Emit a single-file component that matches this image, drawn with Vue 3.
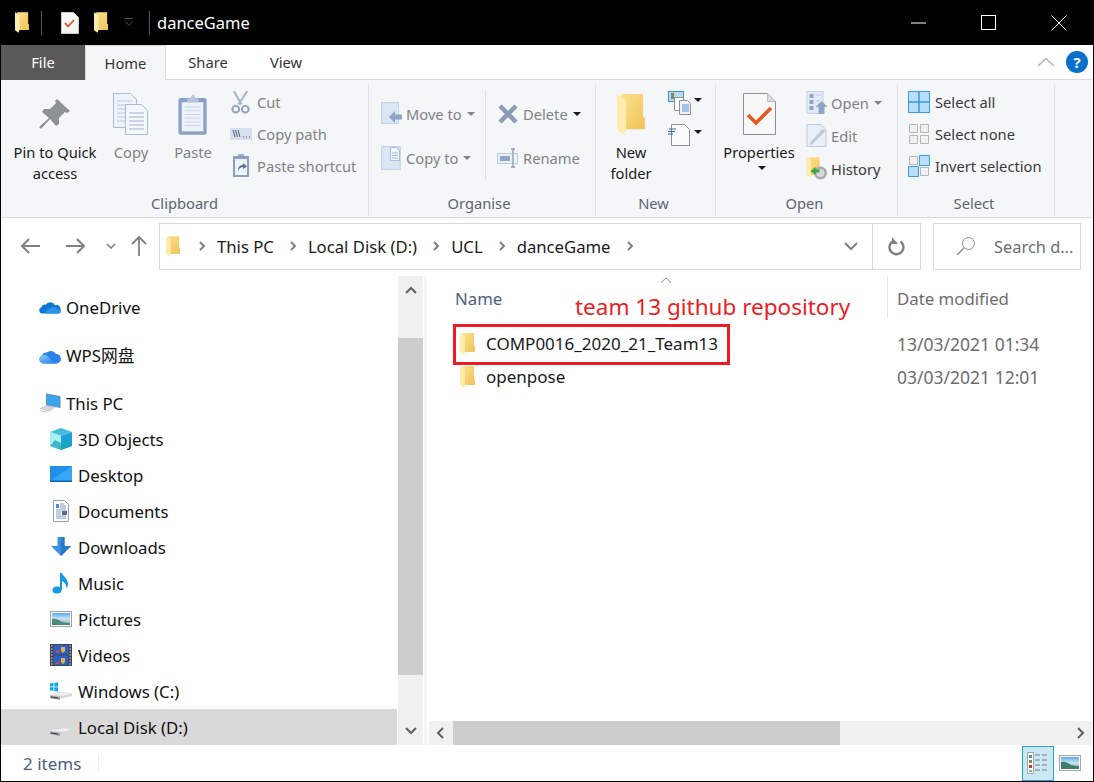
<template>
  <div class="window">
    <!-- shared icons -->
    <svg class="defs" width="0" height="0">
      <defs>
        <linearGradient id="fold" x1="0" y1="0" x2="1" y2="1">
          <stop offset="0" stop-color="#fbe28f" />
          <stop offset="1" stop-color="#f1c258" />
        </linearGradient>
        <linearGradient id="sky" x1="0" y1="0" x2="0" y2="1">
          <stop offset="0" stop-color="#5aa9ee" />
          <stop offset="0.5" stop-color="#cfe6f5" />
          <stop offset="1" stop-color="#6e9c8c" />
        </linearGradient>
        <linearGradient id="wpsg" x1="0" y1="0" x2="1" y2="1">
          <stop offset="0" stop-color="#8ccbfb" />
          <stop offset="1" stop-color="#1f78ea" />
        </linearGradient>
      </defs>
      <symbol id="i-folder" viewBox="0 0 81 120">
        <path d="M12 0H76V67L81 70V103H20Z" fill="url(#fold)" />
        <path d="M0 0L26 17V103L21 120L0 105Z" fill="#fdecab" />
      </symbol>
      <symbol id="i-onedrive" viewBox="0 0 22 22">
        <path d="M3 17.5a3.2 3.2 0 0 1-.6-6.2 3.6 3.6 0 0 1 4.2-2.6A5.4 5.4 0 0 1 16 9.2a4.2 4.2 0 0 1 5.6 4.6 3.4 3.4 0 0 1-1.8 3.7Z" fill="#0f78d4" />
        <path d="M7 17.5c-.6-2.4 1-4.8 3.600-4.800 1.400-2.200 5-2.400 6.600-.4 2-.4 4.300 1 4.300 3.400 0 .8-.5 1.500-1.200 1.800Z" fill="#2a95e8" />
      </symbol>
      <symbol id="i-wps" viewBox="0 0 22 22">
        <path d="M4.500 19.500a4.200 4.200 0 0 1-1.500-8.100 4.600 4.600 0 0 1 4.600-3A6.200 6.200 0 0 1 17 10a4.800 4.800 0 0 1 1 9.500Z" fill="#2a80ec" />
        <path d="M4.500 19.500a4.200 4.200 0 0 1-.4-8.300c3-.6 5.400 1 6.900 3.300 1.500 2.300 3.700 4 7 5Z" fill="url(#wpsg)" />
      </symbol>
      <symbol id="i-pc" viewBox="0 0 24 22">
        <path d="M8 1l15 3v12L8 13Z" fill="#39a7ec" stroke="#5c7183" stroke-width=".7" />
        <path d="M7 14l8 2 0 1-8-2Z" fill="#8fa0ac" />
        <path d="M1 17l7-3 9 2-6 4Z" fill="#d5d9dc" stroke="#a9adb0" stroke-width=".5" />
        <path d="M2 19l8 1.800-3 .6-6-1.400Z" fill="#c3c7ca" />
      </symbol>
      <symbol id="i-cube" viewBox="0 0 22 22">
        <path d="M11 0l11 4-11 4L0 4Z" fill="#44bdd8" />
        <path d="M0 4l11 4v14L0 18Z" fill="#a9eef0" />
        <path d="M22 4L11 8v14l11-4Z" fill="#1b9fd6" />
        <path d="M0 18l5-6 6 3 6-3 5 6-11 4Z" fill="#1ca6b8" opacity=".75" />
      </symbol>
      <symbol id="i-desktop" viewBox="0 0 22 22">
        <rect y="2" width="22" height="16" fill="#1f8fec" />
        <path d="M0 17L22 2v15Z" fill="#36a6f4" />
        <rect y="16.500" width="22" height="1.500" fill="#0a5fb4" />
      </symbol>
      <symbol id="i-doc" viewBox="0 0 22 22">
        <path d="M3.500.5h11l4 4v17h-15Z" fill="#fff" stroke="#9aa0a5" />
        <path d="M6 4h3v4H6Z" fill="#4a90d8" />
        <path d="M10 4h4M10 6h6M10 8h6M6 10h10M6 12h5M6 14h5M6 16h10M6 18h10" stroke="#7f9dbd" />
        <rect x="12" y="11" width="5" height="4" fill="#51717f" />
      </symbol>
      <symbol id="i-down" viewBox="0 0 22 22">
        <path d="M7.500 1h7v9H21l-10 10L1 10h6.500Z" fill="#3d8fe3" />
        <path d="M11 1h3.500v9H21l-10 10Z" fill="#2c78cc" />
      </symbol>
      <symbol id="i-music" viewBox="0 0 22 22">
        <ellipse cx="7" cy="18" rx="4.500" ry="3.500" fill="#159ae6" />
        <path d="M10 18V1h2c.5 3 6 5 6 11 0 2-1 3.500-1.500 4.500 0-4-2-6.500-4.500-7.500v9Z" fill="#159ae6" />
      </symbol>
      <symbol id="i-pic" viewBox="0 0 22 22">
        <rect x=".5" y="3.500" width="21" height="15" fill="#fff" stroke="#a2a6a9" />
        <rect x="2" y="5" width="18" height="12" fill="url(#sky)" />
        <path d="M2 11c4-1 7 1 10 3 3 1 6 1 8 1v2H2Z" fill="#4c8a7a" />
      </symbol>
      <symbol id="i-video" viewBox="0 0 22 22">
        <rect width="22" height="22" fill="#3f4348" />
        <rect x="3.500" y="1" width="15" height="9.500" fill="#2d5fc9" />
        <rect x="3.500" y="11.500" width="15" height="9.500" fill="#2d5fc9" />
        <path d="M11 3h4v4l-2 2-2-2Z" fill="#e8b33a" />
        <path d="M6 6h3v3H6Z" fill="#d8443a" />
        <path d="M11 14h4v4l-2 2-2-2Z" fill="#e8b33a" />
        <path d="M5 20l3-3 2 3Z" fill="#d8443a" />
        <path d="M1 2h1.500M1 5h1.500M1 8h1.500M1 11h1.500M1 14h1.500M1 17h1.500M1 20h1.500M19.500 2H21M19.500 5H21M19.500 8H21M19.500 11H21M19.500 14H21M19.500 17H21M19.500 20H21" stroke="#e4e4e4" />
      </symbol>
      <symbol id="i-drive" viewBox="0 0 22 22">
        <path d="M0 15l8-3 14 1v3L8 19 0 18Z" fill="#d4d6d8" />
        <path d="M0 14.500l14-2.500 8 1-9 3Z" fill="#eceeef" />
        <path d="M0 15.500l10 1.500v3L0 18Z" fill="#9a9c9e" />
        <path d="M1 16.500l7 1v1l-7-1Z" fill="#3b3d40" />
      </symbol>
      <symbol id="i-cdrive" viewBox="0 0 22 22">
        <use href="#i-drive" />
        <path d="M0 3.500l3.500-.5v3.500H0ZM4.300 2.900L8 2.300v4.200H4.300ZM0 7.300h3.500v3.500L0 10.300ZM4.300 7.300H8v4.300l-3.700-.6Z" fill="#0ea5ef" />
      </symbol>
      <symbol id="i-copydoc" viewBox="0 0 36 42">
        <path d="M.5.500h17l6 6v28H.5Z" fill="#eef2f9" stroke="#a9bbd6" />
        <path d="M4 8h15M4 12h15M4 16h15M4 20h15M4 24h15M4 28h15" stroke="#bccbe0" />
        <path d="M12.500 11.500h16l6 6v24h-22Z" fill="#f4f7fb" stroke="#a9bbd6" />
        <path d="M16 20h15M16 24h15M16 28h15M16 32h15M16 36h15" stroke="#9fb2cf" />
      </symbol>
      <symbol id="i-side" viewBox="0 0 20 22">
        <rect x=".5" y=".5" width="17" height="21" fill="#dbe5f3" stroke="#c3d1e6" />
      </symbol>
    </svg>

    <header class="titlebar">
      <svg class="qa qa-first"><use href="#i-folder" /></svg>
      <span class="qa-sep"></span>
      <svg class="qa-check" viewBox="0 0 18 22" width="18" height="22">
        <path d="M.5.500h12l5 5v16H.5Z" fill="#f6f6f6" stroke="#c9c9c9" />
        <path d="M4 11l3 3.500 6-6.500" fill="none" stroke="#e0552a" stroke-width="1.800" />
      </svg>
      <svg class="qa qa-second"><use href="#i-folder" /></svg>
      <svg class="qa-caret" viewBox="0 0 10 9" width="10" height="9">
        <path d="M1 .5h8M1.500 3.500L5 7.500l3.500-4" fill="none" stroke="#4a4a4a" />
      </svg>
      <span class="qa-sep qa-sep-2"></span>
      <span class="title-text">danceGame</span>
      <div class="win-controls">
        <svg width="16" height="16" viewBox="0 0 16 16"><path d="M0 8h15" stroke="#fff" /></svg>
        <svg width="16" height="16" viewBox="0 0 16 16"><rect x=".5" y=".5" width="14" height="14" fill="none" stroke="#fff" /></svg>
        <svg width="16" height="16" viewBox="0 0 16 16"><path d="M.5.500l15 15M15.500.5l-15 15" stroke="#fff" /></svg>
      </div>
    </header>

    <nav class="tabs">
      <span class="tab tab-file">File</span>
      <span class="tab tab-active">Home</span>
      <span class="tab tab-share">Share</span>
      <span class="tab tab-view">View</span>
      <svg class="collapse" width="18" height="10" viewBox="0 0 18 10"><path d="M1 9l8-7.500L17 9" fill="none" stroke="#b4b4b4" stroke-width="1.500" /></svg>
      <span class="help">?</span>
    </nav>

    <section class="ribbon">
      <!-- Clipboard -->
      <div class="group g-clipboard">
        <div class="group-body">
          <div class="big big-pin">
            <div class="big-icon">
              <svg width="32" height="32" viewBox="0 0 32 32"><path d="M18 1l13 12-3 2-2-1-6 6 0 6-3 2-6-7-9 10-2-2 10-9-7-6 2-3 6 0 6-6-1-2Z" fill="#8d9296" /></svg>
            </div>
            <span>Pin to Quick<br />access</span>
          </div>
          <div class="big big-copy off">
            <div class="big-icon"><svg width="36" height="42"><use href="#i-copydoc" /></svg></div>
            <span>Copy</span>
          </div>
          <div class="big big-paste off">
            <div class="big-icon">
              <svg width="30" height="43" viewBox="0 0 32 44">
                <rect x=".5" y="4.500" width="30" height="39" rx="2" fill="#8aa0c4" />
                <rect x="4" y="9" width="23" height="31" fill="#eef2f9" />
                <path d="M7 14h17M7 18h17M7 22h17M7 26h17M7 30h17M7 34h17" stroke="#c6d3e6" />
                <path d="M10 9V5h3l2-4h2l2 4h3v4Z" fill="#b9c6d9" />
              </svg>
            </div>
            <span>Paste</span>
          </div>
          <div class="small-col clip-col">
            <div class="small off">
              <svg width="17" height="23" viewBox="0 0 22 24" preserveAspectRatio="xMinYMid meet">
                <path d="M4 0l8 14M18 0L9 14" stroke="#a8b6cc" stroke-width="2.200" />
                <circle cx="6" cy="19" r="3.500" fill="none" stroke="#8fa1bd" stroke-width="2" />
                <circle cx="16" cy="19" r="3.500" fill="none" stroke="#8fa1bd" stroke-width="2" />
              </svg>
              <span>Cut</span>
            </div>
            <div class="small off">
              <svg width="22" height="14" viewBox="0 0 22 14">
                <rect width="22" height="12" y="1" fill="#d5e0ef" />
                <path d="M3 3l2 7M5.500 3l2 7M8 3l2 7" stroke="#4c5c72" />
                <path d="M13 10h1M16 10h1M19 10h1" stroke="#4c5c72" />
              </svg>
              <span>Copy path</span>
            </div>
            <div class="small off">
              <svg width="22" height="24" viewBox="0 0 22 24">
                <rect x="3" y="2" width="16" height="21" fill="#8ba0c2" />
                <rect x="5" y="5" width="12" height="16" fill="#eef2f9" />
                <path d="M8 2h6V0H8Z" fill="#9db0cc" />
                <path d="M8 17c0-4 2-6 5-6V9l4 3.500L13 15v-2c-2 0-3.500 1-5 4Z" fill="#5b6f8c" />
              </svg>
              <span>Paste shortcut</span>
            </div>
          </div>
        </div>
        <div class="group-label">Clipboard</div>
      </div>

      <!-- Organise -->
      <div class="group g-organise">
        <div class="group-body">
          <div class="small-col tall org-first off">
            <div class="small">
              <svg width="22" height="24" viewBox="0 0 22 24">
                <rect x=".5" y=".5" width="17" height="21" fill="#dbe5f3" stroke="#c3d1e6" />
                <path d="M8 15l6-6v3.500h7v5h-7V21Z" fill="#8ea5c6" />
              </svg>
              <span>Move to</span><i class="caret gray"></i>
            </div>
            <div class="small">
              <svg width="22" height="24" viewBox="0 0 22 24">
                <use href="#i-side" />
                <path d="M9.500 1.500h6l3 3v10h-9Z" fill="#f2f5fa" stroke="#a9bbd6" />
                <path d="M11 7h6M11 9.500h6M11 12h6" stroke="#a9bbd6" />
              </svg>
              <span>Copy to</span><i class="caret gray"></i>
            </div>
          </div>
          <span class="inner-sep"></span>
          <div class="small-col tall org-second off">
            <div class="small">
              <svg width="20" height="20" viewBox="0 0 20 20">
                <path d="M2 2l16 16M18 2L2 18" stroke="#8c9bb5" stroke-width="4.500" />
              </svg>
              <span>Delete</span><i class="caret"></i>
            </div>
            <div class="small">
              <svg width="22" height="20" viewBox="0 0 22 20">
                <rect x=".5" y="5.500" width="20" height="10" fill="#eaf0f8" stroke="#bccbe0" />
                <rect x="3" y="8" width="10" height="5" fill="#8ea5c6" />
                <path d="M14 1h4M16 1v18M14 19h4" stroke="#8c9bb5" stroke-width="1.300" />
              </svg>
              <span>Rename</span>
            </div>
          </div>
        </div>
        <div class="group-label">Organise</div>
      </div>

      <!-- New -->
      <div class="group g-new">
        <div class="group-body">
          <div class="big big-new">
            <div class="big-icon"><svg width="28" height="41"><use href="#i-folder" /></svg></div>
            <span>New<br />folder</span>
          </div>
          <div class="new-col">
            <div class="new-item">
              <svg width="24" height="24" viewBox="0 0 24 24">
                <rect x=".5" y=".5" width="15" height="10" fill="#bcd9ef" stroke="#3a8fc8" />
                <rect x="3" y="2" width="3" height="6" fill="#7a8a5a" />
                <path d="M6.500 6.500h9l0 13h-9Z" fill="#fff" stroke="#8f8f8f" />
                <path d="M11.500 9.500h8l3 3v11h-11Z" fill="#eef3fb" stroke="#8f8f8f" />
                <path d="M14 14h7M14 16h7M14 18h7M14 20h7" stroke="#5e8fcb" />
              </svg>
              <i class="caret"></i>
            </div>
            <div class="new-item">
              <svg width="24" height="24" viewBox="0 0 24 24">
                <path d="M3.500 1.500h13l5 5v16h-18Z" fill="#fbfbfb" stroke="#8f8f8f" />
                <path d="M1 6h7M0 8.500h7M0 11h5" stroke="#2a66a8" />
              </svg>
              <i class="caret"></i>
            </div>
          </div>
        </div>
        <div class="group-label">New</div>
      </div>

      <!-- Open -->
      <div class="group g-open">
        <div class="group-body">
          <div class="big big-props">
            <div class="big-icon">
              <svg width="33" height="42" viewBox="0 0 33 42">
                <path d="M.5.500h24l8 8v33H.5Z" fill="#f8f8f8" stroke="#8f8f8f" />
                <path d="M24.500.5v8h8" fill="#ddd" stroke="#bdbdbd" />
                <path d="M5 22l8 8 15-15" fill="none" stroke="#e5571f" stroke-width="3.500" />
              </svg>
            </div>
            <span>Properties</span>
            <i class="caret props-caret"></i>
          </div>
          <div class="small-col open-col">
            <div class="small off">
              <svg width="21" height="23" viewBox="0 0 21 23">
                <rect x=".5" y=".5" width="16" height="22" fill="#e3eaf5" stroke="#c3d1e6" />
                <path d="M3 3h4v4H3ZM3 9h4v4H3ZM3 15h4v4H3Z" fill="#8ea5c6" />
                <path d="M9 4h6M9 10h4" stroke="#bccbe0" />
                <path d="M15 10l6 6h-3v7h-6v-7H9Z" fill="#8ea5c6" />
              </svg>
              <span>Open</span><i class="caret gray"></i>
            </div>
            <div class="small off">
              <svg width="21" height="23" viewBox="0 0 21 23">
                <path d="M.5.500h14l5 5v17H.5Z" fill="#e9eff8" stroke="#b9c9e0" />
                <path d="M4 18L16 5l3 2L6 20l-3 1Z" fill="#c3c9d2" />
              </svg>
              <span>Edit</span>
            </div>
            <div class="small dark">
              <svg width="21" height="23" viewBox="0 0 21 23">
                <use href="#i-folder" width="14" height="21" />
                <circle cx="14" cy="16" r="6.500" fill="#a8abad" />
                <circle cx="14" cy="16" r="4" fill="#d6d8d9" />
                <path d="M4 14l5-4v2.500h4v3H9V18Z" fill="#3aa648" />
              </svg>
              <span>History</span>
            </div>
          </div>
        </div>
        <div class="group-label">Open</div>
      </div>

      <!-- Select -->
      <div class="group g-select">
        <div class="group-body">
          <div class="small-col select-col">
            <div class="small dark">
              <svg width="22" height="22" viewBox="0 0 22 22">
                <rect x=".5" y=".5" width="21" height="21" fill="#b8def9" stroke="#3a9be0" />
                <path d="M11 0v22M0 11h22" stroke="#3a9be0" stroke-width="1.500" />
              </svg>
              <span>Select all</span>
            </div>
            <div class="small dark">
              <svg width="22" height="22" viewBox="0 0 22 22">
                <path d="M1.500 1.500h8v8h-8ZM12.500 1.500h8v8h-8ZM1.500 12.500h8v8h-8ZM12.500 12.500h8v8h-8Z" fill="#f0f0f0" stroke="#b6b6b6" />
              </svg>
              <span>Select none</span>
            </div>
            <div class="small dark">
              <svg width="22" height="22" viewBox="0 0 22 22">
                <path d="M1.500 1.500h8v8h-8ZM12.500 12.500h8v8h-8Z" fill="#f0f0f0" stroke="#b6b6b6" />
                <path d="M11.500.5h10v10h-10ZM.5 11.500h10v10H.5Z" fill="#b8def9" stroke="#3a9be0" />
              </svg>
              <span>Invert selection</span>
            </div>
          </div>
        </div>
        <div class="group-label">Select</div>
      </div>
    </section>

    <div class="address-row">
      <svg class="nav-arrow" width="20" height="16" viewBox="0 0 20 16"><path d="M9 1L2 8l7 7M2 8h18" fill="none" stroke="#808080" stroke-width="2" /></svg>
      <svg class="nav-arrow fwd" width="20" height="16" viewBox="0 0 20 16"><path d="M11 1l7 7-7 7M18 8H0" fill="none" stroke="#808080" stroke-width="2" /></svg>
      <svg class="nav-drop" width="10" height="6" viewBox="0 0 10 6"><path d="M1 1l4 4 4-4" fill="none" stroke="#808080" stroke-width="1.600" /></svg>
      <svg class="nav-up" width="16" height="20" viewBox="0 0 16 20"><path d="M1 8l7-7 7 7M8 1v19" fill="none" stroke="#808080" stroke-width="1.800" /></svg>
      <div class="address">
        <svg class="crumb-folder" width="14" height="21"><use href="#i-folder" /></svg>
        <template v-for="crumb in crumbs" :key="crumb">
          <svg class="crumb-chev" width="7" height="10" viewBox="0 0 7 10"><path d="M1 1l4 4-4 4" fill="none" stroke="#808080" stroke-width="2" /></svg>
          <span class="crumb">{{ crumb }}</span>
        </template>
        <svg class="crumb-chev" width="7" height="10" viewBox="0 0 7 10"><path d="M1 1l4 4-4 4" fill="none" stroke="#808080" stroke-width="2" /></svg>
        <svg class="addr-drop" width="14" height="9" viewBox="0 0 14 9"><path d="M1 1l6 6 6-6" fill="none" stroke="#808080" stroke-width="2" /></svg>
        <div class="refresh">
          <svg width="17" height="19" viewBox="0 0 17 19"><path d="M12.500 4.500a7 7 0 1 1-7-.6" fill="none" stroke="#808080" stroke-width="2.400" /><path d="M4 0v7h6Z" fill="#808080" /></svg>
        </div>
      </div>
      <div class="search">
        <svg width="20" height="20" viewBox="0 0 20 20"><circle cx="12.500" cy="7.500" r="6" fill="none" stroke="#8a8a8a" /><path d="M8 12l-7 7" stroke="#8a8a8a" stroke-width="1.200" /></svg>
        <span>Search d...</span>
      </div>
    </div>

    <div class="body">
      <aside class="sidebar">
        <div
          v-for="item in navItems"
          :key="item.label"
          class="nav-item"
          :class="{ sub: item.sub, selected: item.selected, spaced: item.spaced }">
          <svg class="nav-icon"><use :href="'#i-' + item.icon" /></svg>
          <span>{{ item.label }}</span>
        </div>
      </aside>

      <div class="vscroll">
        <div class="sb-btn">
          <svg width="12" height="8" viewBox="0 0 12 8"><path d="M1 7l5-5 5 5" fill="none" stroke="#606060" stroke-width="2" /></svg>
        </div>
        <div class="vthumb"></div>
        <div class="sb-rest">
          <svg width="12" height="8" viewBox="0 0 12 8"><path d="M1 1l5 5 5-5" fill="none" stroke="#606060" stroke-width="2" /></svg>
        </div>
      </div>
      <div class="splitter"></div>

      <main class="pane">
        <div class="list-head">
          <div class="col-name">Name</div>
          <div class="col-date">Date modified</div>
          <svg class="sort" width="12" height="6" viewBox="0 0 12 6"><path d="M1 5.500L6 1l5 4.500" fill="none" stroke="#909090" /></svg>
        </div>
        <div class="rows">
          <div v-for="row in rows" :key="row.name" class="row">
            <div class="row-name">
              <svg width="15" height="22"><use href="#i-folder" /></svg>
              <span>{{ row.name }}</span>
            </div>
            <div class="row-date">{{ row.date }}</div>
          </div>
        </div>
        <div class="hscroll">
          <svg class="h-left" width="8" height="12" viewBox="0 0 8 12"><path d="M7 1L2 6l5 5" fill="none" stroke="#606060" stroke-width="2" /></svg>
          <div class="hthumb"></div>
          <svg class="h-right" width="8" height="12" viewBox="0 0 8 12"><path d="M1 1l5 5-5 5" fill="none" stroke="#606060" stroke-width="2" /></svg>
        </div>
        <!-- annotation drawn over the listing -->
        <div class="note">team 13 github repository</div>
        <div class="note-box"></div>
      </main>
    </div>

    <footer class="status">
      <span class="count">2 items</span>
      <span class="status-sep"></span>
      <div class="view-btn active">
        <svg width="22" height="22" viewBox="0 0 22 22">
          <rect x=".5" y=".5" width="6" height="21" fill="#fff" stroke="#a6a6a6" />
          <path d="M2 3h3v3H2Z" fill="#5f8a9a" /><path d="M2 8h3v3H2Z" fill="#7d8f4a" /><path d="M2 13h3v3H2Z" fill="#c0392b" /><path d="M2 18h3v2H2Z" fill="#8fae7a" />
          <path d="M8 3h5M15 3h5M8 8h5M15 8h5M8 13h5M15 13h5M8 18h5M15 18h5" stroke="#7a7a7a" />
        </svg>
      </div>
      <div class="view-btn">
        <svg width="22" height="16" viewBox="0 0 22 16">
          <rect x=".5" y=".5" width="21" height="15" fill="#fff" stroke="#a6a6a6" />
          <rect x="2" y="2" width="18" height="12" fill="url(#sky)" />
          <path d="M2 7c4-1 7 1 10 3 3 1 6 1 8 1v3H2Z" fill="#3f7d6a" />
        </svg>
      </div>
    </footer>
  </div>
</template>

<script setup>
const crumbs = ['This PC', 'Local Disk (D:)', 'UCL', 'danceGame'];

const navItems = [
  { label: 'OneDrive', icon: 'onedrive', spaced: true },
  { label: 'WPS网盘', icon: 'wps', spaced: true },
  { label: 'This PC', icon: 'pc', spaced: true },
  { label: '3D Objects', icon: 'cube', sub: true },
  { label: 'Desktop', icon: 'desktop', sub: true },
  { label: 'Documents', icon: 'doc', sub: true },
  { label: 'Downloads', icon: 'down', sub: true },
  { label: 'Music', icon: 'music', sub: true },
  { label: 'Pictures', icon: 'pic', sub: true },
  { label: 'Videos', icon: 'video', sub: true },
  { label: 'Windows (C:)', icon: 'cdrive', sub: true },
  { label: 'Local Disk (D:)', icon: 'drive', sub: true, selected: true },
];

const rows = [
  { name: 'COMP0016_2020_21_Team13', date: '13/03/2021 01:34' },
  { name: 'openpose', date: '03/03/2021 12:01' },
];
</script>

<style>
html, body { background: #fff; }
</style>

<style scoped>
.window {
  width: 1094px;
  height: 782px;
  box-sizing: border-box;
  display: flex;
  flex-direction: column;
  background: #fff;
  border: 1px solid #000;
  border-top: 0;
  overflow: hidden;
  font-family: "Noto Sans", "Noto Sans CJK SC", sans-serif;
  font-size: 14.7px;
  color: #1a1a1a;
}
.defs { position: absolute; }

/* title bar */
.titlebar {
  height: 45px;
  flex: none;
  background: #000;
  color: #fff;
  display: flex;
  align-items: center;
}
.qa { width: 14px; height: 21px; }
.qa-first { margin-left: 14px; }
.qa-sep { width: 1px; height: 24px; background: #5a5a5a; margin-left: 12px; }
.qa-check { margin-left: 19px; }
.qa-second { margin-left: 15px; }
.qa-caret { margin-left: 16px; }
.qa-sep-2 { margin-left: 15px; }
.title-text { margin-left: 7px; font-size: 16.500px; }
.win-controls { margin-left: auto; display: flex; gap: 54px; padding-right: 26px; }

/* tabs */
.tabs {
  height: 35px;
  flex: none;
  display: flex;
  align-items: stretch;
  border-bottom: 1px solid #dadbdc;
  box-sizing: border-box;
}
.tab { display: flex; align-items: center; justify-content: center; color: #333; padding-bottom: 1px; box-sizing: border-box; }
.tab-file { width: 84px; background: #595959; color: #fff; margin-bottom: -1px; }
.tab-active {
  width: 81px;
  background: #f5f6f7;
  border: 1px solid #dadbdc;
  border-bottom: 0;
  margin-bottom: -1px;
}
.tab-share { width: 84px; }
.tab-view { width: 72px; }
.collapse { margin: auto 0 auto auto; }
.help {
  width: 22px;
  height: 22px;
  border-radius: 50%;
  background: #0a6fc9;
  color: #fff;
  font-weight: 700;
  font-size: 15px;
  line-height: 22px;
  text-align: center;
  margin: auto 5px auto 11px;
}

/* ribbon */
.ribbon {
  height: 138px;
  flex: none;
  display: flex;
  background: #f5f6f7;
  border-bottom: 1px solid #dadbdc;
  box-sizing: border-box;
}
.group {
  display: flex;
  flex-direction: column;
  box-sizing: border-box;
  border-right: 1px solid #e2e3e4;
  margin-top: 4px;
  margin-bottom: 1px;
}
.group-body { flex: 1; display: flex; min-height: 0; }
.group-label { height: 26px; line-height: 26px; text-align: center; color: #5b6470; flex: none; padding-right: 4px; }
.g-clipboard { width: 368px; }
.g-clipboard .group-label { padding-right: 0; }
.g-organise { width: 227px; }
.g-organise .group-label { padding-right: 6px; }
.g-new { width: 120px; }
.g-open { width: 182px; }
.g-select { width: 157px; }

.big {
  display: flex;
  flex-direction: column;
  align-items: center;
  line-height: 21px;
  text-align: center;
  white-space: nowrap;
  flex: none;
}
.big-icon { height: 58px; display: flex; align-items: center; justify-content: center; padding-top: 2px; box-sizing: border-box; }
.big-pin { width: 84px; margin-left: 12px; }
.big-copy { width: 52px; margin-left: 8px; }
.big-paste { width: 52px; margin-left: 10px; }
.big-new { width: 60px; margin-left: 5px; }
.big-props { width: 80px; margin-left: 3px; }
.props-caret { margin-top: 3px; }
.off { color: #7f8286; }
.dark { color: #3a3a3a; }

.small-col { display: flex; flex-direction: column; padding-top: 2px; margin-left: 6px; }
.small { height: 32px; display: flex; align-items: center; white-space: nowrap; }
.small > svg { width: 22px; flex: none; margin-right: 3px; }
.clip-col { margin-left: 11px; }
.clip-col .small > svg { margin-right: 5px; }
.small-col.tall { padding-top: 14px; gap: 12px; margin-left: 12px; }
.small-col.org-first { width: 94px; flex: none; }
.small-col.org-second { margin-left: 11px; }
.org-second .small > svg { margin-right: 4px; }
.inner-sep { width: 1px; height: 90px; background: #e0e1e2; margin: 6px 0 0 10px; flex: none; }
.open-col { margin-left: 7px; }
.open-col .small { height: 33px; }
.select-col { margin-left: 10px; }
.select-col .small > svg { margin-right: 5px; }

.caret {
  width: 0;
  height: 0;
  border: 4px solid transparent;
  border-top: 4px solid #1a1a1a;
  border-bottom: 0;
  margin-left: 5px;
  display: inline-block;
}
.caret.gray { border-top-color: #7f8286; }

.new-col { display: flex; flex-direction: column; gap: 8px; margin-left: 7px; padding-top: 7px; }
.new-item { display: flex; align-items: center; height: 24px; }
.new-item .caret { margin-left: 2px; margin-top: -6px; }

/* address bar */
.address-row {
  height: 58px;
  flex: none;
  display: flex;
  align-items: center;
  padding-bottom: 2px;
  box-sizing: border-box;
}
.nav-arrow { margin-left: 19px; }
.nav-arrow.fwd { margin-left: 26px; }
.nav-drop { margin-left: 20px; }
.nav-up { margin-left: 15px; }
.address {
  width: 762px;
  height: 47px;
  margin-left: 12px;
  box-sizing: border-box;
  border: 1px solid #d9d9d9;
  display: flex;
  align-items: center;
  padding-left: 6px;
}
.crumb-folder { margin-right: 19px; }
.crumb { font-size: 16.700px; margin: 0 16px 0 11px; color: #1a1a1a; white-space: nowrap; }
.addr-drop { margin-left: auto; margin-right: 14px; }
.refresh {
  width: 48px;
  height: 100%;
  border-left: 1px solid #d9d9d9;
  display: flex;
  align-items: center;
  justify-content: center;
  box-sizing: border-box;
}
.search {
  width: 148px;
  height: 47px;
  margin-left: 12px;
  box-sizing: border-box;
  border: 1px solid #d9d9d9;
  display: flex;
  align-items: center;
  padding-left: 22px;
  gap: 18px;
  color: #6d6d6d;
  font-size: 16.400px;
  white-space: nowrap;
}

/* main area */
.body { flex: 1; display: flex; min-height: 0; font-size: 16.800px; }
.sidebar { width: 396px; flex: none; padding-top: 13px; box-sizing: border-box; overflow: hidden; }
.nav-item { height: 36px; display: flex; align-items: center; padding-left: 38px; gap: 5px; white-space: nowrap; color: #111; }
.nav-item.spaced { margin-bottom: 12px; }
.nav-item.sub { padding-left: 49px; gap: 6px; }
.nav-item.spaced:nth-child(3) { margin-bottom: 0; }
.nav-item.selected { background: #d9d9d9; }
.nav-icon { width: 22px; height: 22px; flex: none; }

.vscroll {
  width: 25px;
  margin-left: 1px;
  flex: none;
  display: flex;
  flex-direction: column;
  background: #f0f0f0;
}
.sb-btn { height: 62px; display: flex; justify-content: center; padding-top: 10px; box-sizing: border-box; flex: none; }
.vthumb { height: 337px; background: #cdcdcd; flex: none; }
.sb-rest { flex: 1; display: flex; align-items: flex-end; justify-content: center; padding-bottom: 10px; box-sizing: border-box; }
.splitter { width: 6px; flex: none; background: linear-gradient(90deg, #fff 0 1px, #f5f5f5 1px 4px, #fff 4px); }

.pane { flex: 1; min-width: 0; display: flex; flex-direction: column; position: relative; }
.list-head { height: 42px; margin-bottom: 9px; display: flex; flex: none; position: relative; color: #4c607a; }
.col-name { width: 458px; padding: 11px 0 0 26px; box-sizing: border-box; }
.col-date { flex: 1; padding: 11px 0 0 9px; border-left: 1px solid #e5e5e5; color: #6d6d6d; white-space: nowrap; }
.sort { position: absolute; left: 231px; top: 1px; }
.rows { flex: 1; }
.row { height: 33px; display: flex; align-items: center; }
.row-name { width: 459px; display: flex; align-items: center; gap: 11px; padding-left: 31px; box-sizing: border-box; font-size: 17px; }
.row-date { padding-left: 9px; color: #6d6d6d; font-size: 17.500px; white-space: nowrap; }

.hscroll { height: 24px; flex: none; background: #f0f0f0; display: flex; align-items: center; }
.h-left { margin-left: 7px; }
.hthumb { width: 387px; height: 100%; background: #cdcdcd; margin-left: 9px; }
.h-right { margin-left: auto; margin-right: 8px; }

.note {
  position: absolute;
  left: 146px;
  top: 15px;
  color: #ed1c24;
  font-size: 22.500px;
  white-space: nowrap;
}
.note-box {
  position: absolute;
  left: 24px;
  top: 48px;
  width: 277px;
  height: 41px;
  box-sizing: border-box;
  border: 3px solid #ed1c24;
}

/* status bar */
.status { height: 36px; flex: none; display: flex; align-items: center; }
.count { margin-left: 22px; color: #4c607a; width: 75px; font-size: 17px; }
.status-sep { width: 1px; height: 18px; background: #ececec; }
.view-btn { width: 32px; height: 35px; display: flex; align-items: center; justify-content: center; box-sizing: border-box; }
.view-btn.active { margin-left: auto; background: #cbe8f7; border: 1px solid #26a0da; }
.view-btn:last-child { margin-right: 7px; }
</style>
